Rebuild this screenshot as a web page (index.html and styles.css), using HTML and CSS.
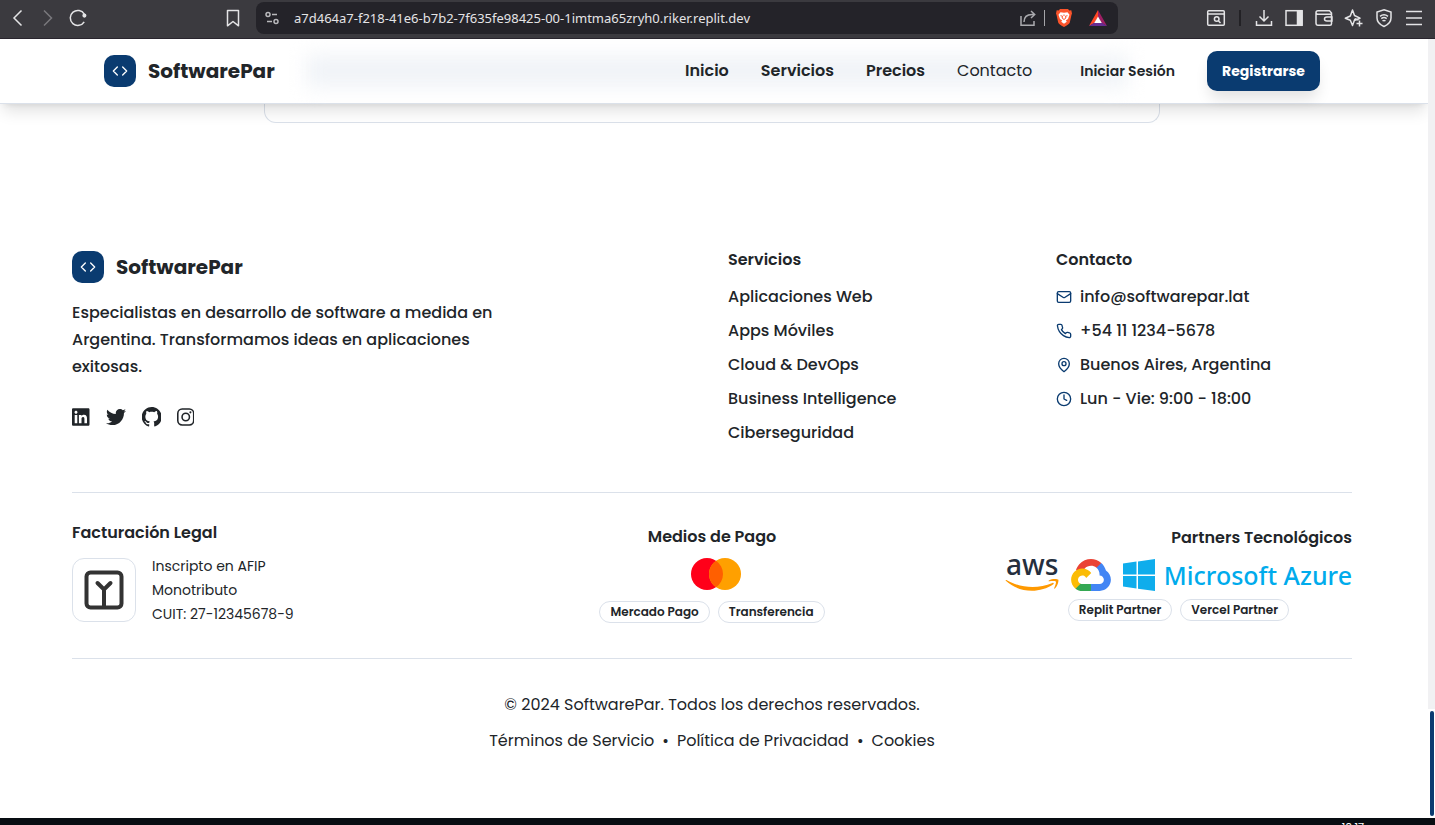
FILE: index.html
```html
<!DOCTYPE html>
<html lang="es">
<head>
<meta charset="utf-8">
<title>SoftwarePar</title>
<link rel="stylesheet" href="styles.css">
</head>
<body>
<div class="window">
  <div class="toolbar">
    <div class="tools-left">
      <button class="tool" aria-label="Atrás"><svg width="20" height="20" viewBox="0 0 20 20"><path d="M13.500 2.500 6 10l7.500 7.500"/></svg></button>
      <button class="tool dim" aria-label="Adelante"><svg width="20" height="20" viewBox="0 0 20 20"><path d="M6 2.500 13.500 10 6 17.500"/></svg></button>
      <button class="tool" aria-label="Recargar"><svg width="20" height="20" viewBox="0 0 20 20"><path d="M16.200 13.800A7.500 7.500 0 1 1 16.300 6.200"/><circle cx="16.400" cy="7.600" r="1.300" fill="currentColor"/></svg></button>
      <button class="tool bookmark" aria-label="Marcador"><svg width="20" height="20" viewBox="0 0 20 20"><path d="M4.500 2.500h11v15.300L10 13.500l-5.500 4.300z" stroke-linejoin="round"/></svg></button>
    </div>
    <div class="address">
      <svg class="site" width="16" height="16" viewBox="0 0 16 16"><circle cx="4" cy="4.500" r="2"/><path d="M8 4.500h5M3 11.500h5"/><circle cx="12" cy="11.500" r="2"/></svg>
      <input class="url" type="text" aria-label="Dirección" value="a7d464a7-f218-41e6-b7b2-7f635fe98425-00-1imtma65zryh0.riker.replit.dev">
      <button class="tool share" aria-label="Compartir"><svg width="18" height="18" viewBox="0 0 18 18"><path d="M2 7v9.300h13V12M5 13c0-5 3-7.500 8-7.500h2.500M12 2l3.700 3.500L12 9"/></svg></button>
      <span class="bar"></span>
      <button class="tool shield" aria-label="Brave Shields"><svg width="18" height="20" viewBox="0 0 18 20"><path fill="#fb542b" stroke="none" d="M5 1h8l1.300 1.500 2-.2L17 5.500l-.6 1.800-1.600 7.300c-.4 1.400-2.300 2.700-5.800 4.400-3.500-1.700-5.400-3-5.800-4.400L1.600 7.300 1 5.500l.7-3.200 2 .2z"/><path fill="#fff" stroke="none" d="m5.500 4.300 3.500.5 3.500-.5 2 2.500-1.500 4.300-2.200 1.500 1 1.200L9 15.700l-2.800-1.900 1-1.200L5 11.100 3.500 6.800z"/><path class="fine" d="m5.500 7.700 2 .5-.4 1.800L9 11.500l1.900-1.500-.4-1.800 2-.5M9 6.500V8"/></svg></button>
      <button class="tool" aria-label="Brave Rewards"><svg width="20" height="18" viewBox="0 0 20 18"><path stroke="none" fill="#ff4724" d="M10 1 1 17l5.500-3L10 8z"/><path stroke="none" fill="#9e1f63" d="m10 1 9 16-5.500-3L10 8z"/><path stroke="none" fill="#662d91" d="M1 17h18l-5.500-3.500h-7z"/><path stroke="none" fill="#fff" d="m10 7.500 3.800 6.500H6.200z"/></svg></button>
    </div>
    <div class="tools-right">
      <button class="tool" aria-label="Buscar pestañas"><svg width="20" height="20" viewBox="0 0 20 20"><rect x="1.700" y="2.700" width="16.600" height="14.600" rx="1"/><path d="M2 6h16m-5.500 7 2 2"/><circle cx="10.700" cy="11" r="2.300"/></svg></button>
      <span class="bar dark"></span>
      <button class="tool" aria-label="Descargas"><svg width="20" height="20" viewBox="0 0 20 20"><path d="M10 2v11m-4.500-4.500L10 13l4.500-4.500M2.500 13v4.300h15V13"/></svg></button>
      <button class="tool" aria-label="Panel lateral"><svg width="20" height="20" viewBox="0 0 20 20"><rect x="2" y="2.700" width="16" height="14.600"/><path fill="currentColor" d="M13.500 3H18v14h-4.500z"/></svg></button>
      <button class="tool" aria-label="Cartera"><svg width="20" height="20" viewBox="0 0 20 20"><path d="M17.500 7V5L15.500 2.700H4Q2 2.700 2 4.500V15q0 2.300 2 2.300h12q1.500 0 1.500-1.500V6.300H4Q2 6.300 2 4.500M18 9h-5q-2.500 0-2.500 2t2.500 2h5z"/></svg></button>
      <button class="tool" aria-label="Leo"><svg width="20" height="20" viewBox="0 0 20 20"><path stroke-linejoin="round" d="M14.500 12 11 10.800m0 0L8.500 17.500l-2.200-5.300-5-2 5-2.200L8.500 2l2 5.500 5.500 2.700-5 2M15.500 12.500v6M12.500 15.500h6"/></svg></button>
      <button class="tool" aria-label="VPN"><svg width="20" height="20" viewBox="0 0 20 20"><path d="M10 1.700 17 4v6q0 5.500-7 8.500-7-3-7-8.500V4zM6 8.300q4-3 8 0M7.300 10.600q2.700-2 5.400 0M8.500 13q1.500-1.200 3 0"/></svg></button>
      <button class="tool" aria-label="Menú"><svg width="20" height="20" viewBox="0 0 20 20"><path d="M2 3.500h16M2 10h16M2 16.500h16"/></svg></button>
    </div>
  </div>

  <div class="view">
    <div class="page">
      <header class="header">
        <div class="header-inner">
          <a class="brand" href="#"><span class="mark"><svg class="line" width="16" height="16" viewBox="0 0 24 24"><path d="m16 18 6-6-6-6M8 6l-6 6 6 6"/></svg></span>SoftwarePar</a>
          <nav class="nav">
            <a href="#">Inicio</a>
            <a href="#">Servicios</a>
            <a href="#">Precios</a>
            <a class="light" href="#">Contacto</a>
          </nav>
          <a class="login" href="#">Iniciar Sesión</a>
          <button class="register">Registrarse</button>
        </div>
      </header>
      <main class="content"><div class="card-end"></div></main>

      <footer class="footer">
        <div class="columns">
          <section class="about">
            <a class="brand" href="#"><span class="mark"><svg class="line" width="16" height="16" viewBox="0 0 24 24"><path d="m16 18 6-6-6-6M8 6l-6 6 6 6"/></svg></span>SoftwarePar</a>
            <p>Especialistas en desarrollo de software a medida en Argentina. Transformamos ideas en aplicaciones exitosas.</p>
            <div class="social">
              <a href="#" aria-label="LinkedIn"><svg height="20" viewBox="0 0 448 512"><path d="M416 32H31.900C14.300 32 0 46.500 0 64.300v383.400C0 465.500 14.300 480 31.900 480H416c17.600 0 32-14.500 32-32.300V64.300c0-17.800-14.400-32.300-32-32.300zM135.400 416H69V202.200h66.500V416zm-33.200-243c-21.300 0-38.500-17.300-38.500-38.500S80.900 96 102.200 96c21.200 0 38.500 17.300 38.500 38.500 0 21.300-17.200 38.500-38.500 38.500zm282.100 243h-66.400V312c0-24.800-.5-56.700-34.500-56.700-34.600 0-39.900 27-39.900 54.900V416h-66.400V202.200h63.700v29.200h.9c8.900-16.800 30.600-34.500 62.900-34.500 67.200 0 79.700 44.300 79.700 101.900V416z"/></svg></a>
              <a href="#" aria-label="Twitter"><svg height="20" viewBox="0 0 512 512"><path d="M459.370 151.716c.325 4.548.325 9.097.325 13.645 0 138.720-105.583 298.558-298.558 298.558-59.452 0-114.680-17.219-161.137-47.106 8.447.974 16.568 1.299 25.340 1.299 49.055 0 94.213-16.568 130.274-44.832-46.132-.975-84.792-31.188-98.112-72.772 6.498.974 12.995 1.624 19.818 1.624 9.421 0 18.843-1.300 27.614-3.573-48.081-9.747-84.143-51.980-84.143-102.985v-1.299c13.969 7.797 30.214 12.670 47.431 13.319-28.264-18.843-46.781-51.005-46.781-87.391 0-19.492 5.197-37.360 14.294-52.954 51.655 63.675 129.300 105.258 216.365 109.807-1.624-7.797-2.599-15.918-2.599-24.040 0-57.828 46.782-104.934 104.934-104.934 30.213 0 57.502 12.670 76.670 33.137 23.715-4.548 46.456-13.320 66.599-25.340-7.798 24.366-24.366 44.833-46.132 57.827 21.117-2.273 41.584-8.122 60.426-16.243-14.292 20.791-32.161 39.308-52.628 54.253z"/></svg></a>
              <a href="#" aria-label="GitHub"><svg height="20" viewBox="0.250 0 15.500 16"><path d="M8 0C3.580 0 0 3.580 0 8c0 3.540 2.290 6.530 5.470 7.590.4.070.55-.170.55-.380 0-.190-.010-.820-.010-1.490-2.010.370-2.530-.490-2.690-.940-.090-.230-.480-.940-.820-1.130-.280-.150-.680-.520-.010-.530.630-.010 1.080.580 1.230.820.720 1.210 1.870.870 2.330.660.070-.520.280-.870.510-1.070-1.780-.2-3.640-.890-3.640-3.950 0-.870.310-1.590.820-2.150-.080-.2-.360-1.020.080-2.120 0 0 .67-.210 2.200.820.640-.180 1.320-.270 2-.270s1.360.090 2 .270c1.530-1.040 2.200-.820 2.200-.820.440 1.100.160 1.920.080 2.120.510.560.820 1.270.820 2.150 0 3.070-1.870 3.750-3.650 3.950.290.250.540.730.540 1.480 0 1.070-.010 1.930-.010 2.200 0 .210.150.460.550.380A8.010 8.010 0 0 0 16 8c0-4.420-3.580-8-8-8z"/></svg></a>
              <a href="#" aria-label="Instagram"><svg height="20" viewBox="0 0 448 512"><rect x="20" y="52" width="408" height="408" rx="112" fill="none" stroke="currentColor" stroke-width="40"/><circle cx="224" cy="256" r="95" fill="none" stroke="currentColor" stroke-width="40"/><circle cx="343" cy="137" r="27"/></svg></a>
            </div>
          </section>
          <section>
            <h3>Servicios</h3>
            <ul class="list">
              <li><a href="#">Aplicaciones Web</a></li>
              <li><a href="#">Apps Móviles</a></li>
              <li><a href="#">Cloud &amp; DevOps</a></li>
              <li><a href="#">Business Intelligence</a></li>
              <li><a href="#">Ciberseguridad</a></li>
            </ul>
          </section>
          <section>
            <h3>Contacto</h3>
            <ul class="list">
              <li><svg class="line" width="16" height="16" viewBox="0 0 24 24"><rect width="20" height="16" x="2" y="4" rx="2"/><path d="m22 7-8.970 5.700a1.940 1.940 0 0 1-2.060 0L2 7"/></svg>info@softwarepar.lat</li>
              <li><svg class="line" width="16" height="16" viewBox="0 0 24 24"><path d="M22 16.920v3a2 2 0 0 1-2.180 2 19.790 19.790 0 0 1-8.630-3.070 19.500 19.500 0 0 1-6-6 19.790 19.790 0 0 1-3.070-8.670A2 2 0 0 1 4.110 2h3a2 2 0 0 1 2 1.720 12.840 12.840 0 0 0 .7 2.810 2 2 0 0 1-.450 2.110L8.090 9.910a16 16 0 0 0 6 6l1.270-1.270a2 2 0 0 1 2.110-.450 12.840 12.840 0 0 0 2.810.7A2 2 0 0 1 22 16.920z"/></svg>+54 11 1234-5678</li>
              <li><svg class="line" width="16" height="16" viewBox="0 0 24 24"><path d="M20 10c0 6-8 12-8 12s-8-6-8-12a8 8 0 0 1 16 0Z"/><circle cx="12" cy="10" r="3"/></svg>Buenos Aires, Argentina</li>
              <li><svg class="line" width="16" height="16" viewBox="0 0 24 24"><circle cx="12" cy="12" r="10"/><path d="M12 6v6l4 2"/></svg>Lun - Vie: 9:00 - 18:00</li>
            </ul>
          </section>
        </div>

        <div class="trust">
          <section class="legal">
            <h4>Facturación Legal</h4>
            <div class="fiscal">
              <span class="seal"><svg width="40" height="40" viewBox="0 0 40 40"><rect x="2.500" y="2.500" width="35" height="35" rx="4"/><path d="M20 37V19m-6.500-6L20 19.500l6.500-6.500"/></svg></span>
              <p>Inscripto en AFIP<br>Monotributo<br>CUIT: 27-12345678-9</p>
            </div>
          </section>
          <section class="payments">
            <h4>Medios de Pago</h4>
            <svg class="mastercard" width="60" height="32" viewBox="-8 0 60 32"><circle cx="17" cy="16" r="16" fill="#ff0019"/><circle cx="35" cy="16" r="16" fill="#ffa000"/><path d="M26 2.770a16 16 0 0 1 0 26.460 16 16 0 0 1 0-26.460z" fill="#ff5f00"/></svg>
            <div class="chips"><span>Mercado Pago</span><span>Transferencia</span></div>
          </section>
          <section class="partners">
            <h4>Partners Tecnológicos</h4>
            <div class="logos">
              <svg class="aws" width="54" height="32" viewBox="0 0 304 182"><text x="4" y="92" font-size="160">aws</text><g fill="#f90"><path d="M273.500 143.700c-32.900 24.300-80.700 37.200-121.800 37.200-57.600 0-109.500-21.300-148.700-56.700-3.100-2.800-.3-6.600 3.400-4.400 42.400 24.600 94.700 39.500 148.800 39.500 36.500 0 76.600-7.600 113.500-23.200 5.500-2.500 10.200 3.600 4.800 7.600z"/><path d="M287.200 128.100c-4.200-5.400-27.800-2.600-38.500-1.300-3.200.4-3.700-2.400-.8-4.500 18.800-13.200 49.700-9.400 53.300-5 3.600 4.500-1 35.400-18.600 50.200-2.700 2.300-5.300 1.100-4.100-1.900 4-9.900 12.900-32.200 8.700-37.500z"/></g></svg>
              <svg width="40" height="32" viewBox="0 0 256 206"><path fill="#ea4335" d="M170.252 56.819 192.505 34.566 193.988 25.196C153.437-11.677 88.976-7.496 52.421 33.921 42.267 45.424 34.734 59.764 30.717 74.573L38.687 73.450 83.191 66.111 86.627 62.597C106.424 40.855 139.896 37.929 162.756 56.431z"/><path fill="#4285f4" d="M224.205 73.918C219.090 55.082 208.589 38.149 193.988 25.196L162.758 56.426C175.945 67.201 183.453 83.429 183.135 100.454V105.998C198.486 105.998 210.931 118.442 210.931 133.793S198.486 161.286 183.135 161.286H127.464L121.998 167.220V200.563L127.464 205.795H183.135C223.067 206.106 255.687 174.302 255.998 134.371 256.187 110.167 244.252 87.487 224.205 73.918"/><path fill="#34a853" d="M71.870 205.796H127.464V161.290H71.870C67.909 161.290 63.995 160.438 60.397 158.792L52.495 161.210 30.171 183.464 28.226 191.005C40.786 200.489 56.131 205.858 71.870 205.796"/><path fill="#fbbc05" d="M71.870 61.426C31.943 61.664-.237 94.223.002 134.150.134 156.447 10.548 177.446 28.226 191.035L60.475 158.787C46.484 152.465 40.271 136.002 46.593 122.011 52.915 108.021 69.378 101.800 83.364 108.122 89.527 110.907 94.463 115.848 97.253 122.011L129.502 89.762C115.781 71.823 94.454 61.327 71.870 61.426"/></svg>
              <span class="azure"><svg width="32" height="32" viewBox="0 0 32 32"><path fill="#0fadec" d="M0 4.500 13.500 2.600V15.500H0zM15 2.400 32 0V15.500H15zM0 17h13.500v12.600L0 27.600zM15 17h17v15l-17-2.300z"/></svg>Microsoft Azure</span>
            </div>
            <div class="chips"><span>Replit Partner</span><span>Vercel Partner</span></div>
          </section>
        </div>

        <div class="copyright">
          <p>© 2024 SoftwarePar. Todos los derechos reservados.</p>
          <p class="links"><a href="#">Términos de Servicio</a><span>•</span><a href="#">Política de Privacidad</a><span>•</span><a href="#">Cookies</a></p>
        </div>
      </footer>
    </div>
    <div class="scrollbar"><div class="thumb"></div></div>
  </div>
  <div class="taskbar"><span>10:17</span></div>
</div>
</body>
</html>
```
FILE: styles.css
```css
* { box-sizing: border-box; }
body { margin: 0; font-family: Poppins, Inter, sans-serif; font-size: 16px; color: #212529; background: #fff; }
a { color: inherit; text-decoration: none; }
p, h3, h4, ul { margin: 0; padding: 0; }
ul { list-style: none; }
button { font: inherit; border: 0; padding: 0; background: none; cursor: pointer; }
svg { display: block; flex: none; }
.line { fill: none; stroke: currentColor; stroke-width: 2; stroke-linecap: round; stroke-linejoin: round; }

.window { height: 100vh; display: flex; flex-direction: column; overflow: hidden; }

/* Browser toolbar */
.toolbar { flex: none; height: 39px; padding: 2px 11px 5px 8px; display: flex; align-items: center; background: #3b3a3f; border-bottom: 1px solid #29252e; color: #e4e4e6; }
.tool { display: flex; color: inherit; }
.tool svg { fill: none; stroke: currentColor; stroke-width: 1.5; }
.tool .fine { stroke: #fb542b; stroke-width: 1; }
.tool.dim { color: #79787d; }
.tools-left { flex: none; width: 248px; padding-right: 13px; display: flex; gap: 10px; }
.bookmark { margin-left: auto; }
.address { flex: 1; height: 32px; padding: 0 10px 0 8px; display: flex; align-items: center; border-radius: 8px; background: #242329; }
.site { fill: none; stroke: #b9b9bc; stroke-width: 1.5; }
.url { flex: 1; min-width: 0; margin-left: 14px; padding: 0; border: 0; outline: 0; background: none; color: #e4e4e6; font: 13px/20px "Noto Sans", sans-serif; }
.share { color: #aaaaae; }
.bar { width: 1px; height: 16px; margin: 0 10px 0 7px; background: #a5a5a9; }
.shield { margin-right: 15px; }
.tools-right { flex: none; width: 306px; padding-left: 88px; display: flex; align-items: center; gap: 10px; }
.bar.dark { width: 2px; margin: 0 3px; background: #222125; }

/* Page */
.view { flex: 1; min-height: 0; display: flex; }
.page { flex: 1; min-width: 0; overflow: hidden; }
.header { position: relative; height: 65px; padding: 0 76px 0 72px; background: #fff; border-bottom: 1px solid #dbe1ea; box-shadow: 0 10px 15px -3px rgba(0, 0, 0, .12), 0 4px 6px -4px rgba(0, 0, 0, .1); }
.header::before { content: ""; position: absolute; top: 16px; bottom: 16px; left: 306px; right: 300px; background: #f0f3f7; filter: blur(10px); }
.header-inner { position: relative; height: 64px; max-width: 1280px; margin: 0 auto; padding: 0 32px; display: flex; align-items: center; }
.brand { display: flex; align-items: center; gap: 12px; font-size: 20px; font-weight: 700; line-height: 32px; }
.mark { width: 32px; height: 32px; display: grid; place-items: center; border-radius: 10px; background: #0a3b70; color: #fff; }
.nav { margin-left: auto; padding-bottom: 2px; display: flex; gap: 32px; font-weight: 600; }
.nav .light { font-weight: 400; }
.login { margin: 0 32px 0 48px; font-size: 14px; font-weight: 600; }
.register { width: 113px; height: 40px; border-radius: 10px; background: #0a3b70; color: #fff; font-size: 14px; font-weight: 700; box-shadow: 0 10px 15px -3px rgba(0, 0, 0, .12); }
.content { padding: 0 76px 0 72px; }
.card-end { height: 19px; max-width: 896px; margin: 0 auto; border: 1px solid #dbe1ea; border-top: 0; border-radius: 0 0 12px 12px; }

.footer { max-width: 1428px; margin: 0 auto; padding: 128px 76px 0 72px; }
.columns { display: grid; grid-template-columns: repeat(4, 1fr); gap: 32px; padding-bottom: 46px; font-weight: 500; }
.about { grid-column: span 2; }
.about p { max-width: 448px; margin: 16px 0 27px; line-height: 27px; }
.social { display: flex; gap: 16px; }
.social svg { fill: currentColor; }
h3 { margin-bottom: 15px; font-size: 16px; line-height: 18px; font-weight: 600; }
.list { display: grid; gap: 8px; line-height: 26px; }
.list li { display: flex; align-items: center; gap: 8px; }
.list svg { color: #0a3b70; }

.trust { display: grid; grid-template-columns: 1fr auto 1fr; align-items: center; padding: 30px 0 32px; border-top: 1px solid #dbe1ea; border-bottom: 1px solid #dbe1ea; }
h4 { font-size: 16px; line-height: 20px; font-weight: 600; margin-bottom: 11px; }
.fiscal { display: flex; align-items: center; gap: 16px; font-size: 14px; line-height: 24px; }
.seal { width: 64px; height: 64px; display: grid; place-items: center; border: 1px solid #dbe1ea; border-radius: 12px; }
.seal svg { fill: none; stroke: #333; stroke-width: 4; stroke-linecap: round; }
.payments { display: flex; flex-direction: column; align-items: center; }
.mastercard { margin-bottom: 11px; }
.chips { display: flex; justify-content: center; gap: 8px; }
.chips span { padding: 0 10px; border: 1px solid #dbe1ea; border-radius: 11px; font-size: 12px; line-height: 20px; font-weight: 600; }
.partners { justify-self: end; }
.partners h4 { text-align: right; }
.logos { display: flex; gap: 12px; margin-bottom: 8px; }
.aws { overflow: visible; font-family: "Noto Sans", sans-serif; font-weight: 500; fill: #252f3e; }
.azure { display: flex; align-items: center; gap: 9px; font: 500 25px/32px "Noto Sans", sans-serif; color: #00abec; }

.copyright { padding-top: 32px; display: grid; gap: 9px; justify-items: center; line-height: 27px; }
.links { display: flex; gap: 8px; }

.scrollbar { flex: none; width: 7px; display: flex; flex-direction: column; justify-content: flex-end; padding: 0 1px 2px 2px; background: linear-gradient(#f1f1f3 86%, #fff 86%); }
.thumb { height: 105px; border-radius: 2px; background: #0a3b70; }
.taskbar { flex: none; height: 7px; padding: 3px 71px 0 0; overflow: hidden; background: #080d12; color: #fff; text-align: right; font-size: 11px; line-height: 12px; }
```
